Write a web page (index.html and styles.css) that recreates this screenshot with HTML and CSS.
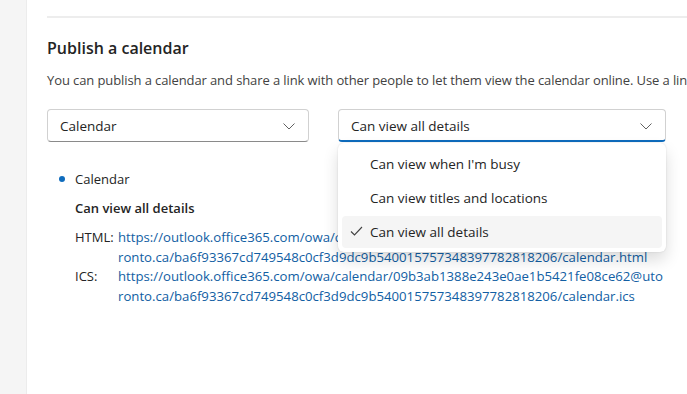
FILE: index.html
```
<!DOCTYPE html>
<html lang="en">
<head>
  <meta charset="UTF-8" />
  <title>Publish a calendar</title>
  <link rel="stylesheet" href="styles.css">
</head>
<body>
  <div class="rail"></div>

  <main class="panel">
    <hr class="divider" />

    <h2 class="title">Publish a calendar</h2>
    <p class="intro">You can publish a calendar and share a link with other people to let them view the calendar online. Use a link to add this calendar to other apps.</p>

    <div class="selects">
      <div class="dropdown">
        <span>Calendar</span>
        <svg class="chevron" width="12" height="12" viewBox="0 0 12 12"><path d="M0.5 3.5l5.5 5.5 5.5-5.5" fill="none" stroke="#616161" stroke-width="1" /></svg>
      </div>

      <div class="dropdown-wrap">
        <div class="dropdown open">
          <span>Can view all details</span>
          <svg class="chevron" width="12" height="12" viewBox="0 0 12 12"><path d="M0.5 3.5l5.5 5.5 5.5-5.5" fill="none" stroke="#616161" stroke-width="1" /></svg>
        </div>
        <ul class="menu">
          <li>Can view when I'm busy</li>
          <li>Can view titles and locations</li>
          <li class="selected">
            <svg class="check" width="13" height="12" viewBox="0 0 13 12"><path d="M1 6.5l3.5 3.5L12 2" fill="none" stroke="#424242" stroke-width="1.1" /></svg>
            Can view all details
          </li>
        </ul>
      </div>
    </div>

    <ul class="published">
      <li>
        <div class="cal-name">Calendar</div>
        <div class="perm">Can view all details</div>
        <div class="links">
          <span class="kind">HTML:</span>
          <a href="#">https://outlook.office365.com/owa/calendar/09b3ab1388e243e0ae1b5421fe08ce62@uto<br>ronto.ca/ba6f93367cd749548c0cf3d9dc9b540015757348397782818206/calendar.html</a>
          <span class="kind">ICS:</span>
          <a href="#">https://outlook.office365.com/owa/calendar/09b3ab1388e243e0ae1b5421fe08ce62@uto<br>ronto.ca/ba6f93367cd749548c0cf3d9dc9b540015757348397782818206/calendar.ics</a>
        </div>
      </li>
    </ul>
  </main>
</body>
</html>
```

FILE: styles.css
```
* {
  box-sizing: border-box;
}

body {
  margin: 0;
  font-family: "Open Sans", "Noto Sans", sans-serif;
  font-size: 13px;
  color: #242424;
  background: #fff;
  display: flex;
  height: 394px;
  overflow: hidden;
}

.rail {
  width: 27px;
  flex-shrink: 0;
  background: #f5f5f5;
  border-right: 1px solid #ececec;
}

.panel {
  flex: 1;
  padding: 16px 0 0 20px;
  min-width: 0;
  overflow: hidden;
}

.divider {
  margin: 0;
  border: none;
  border-top: 2px solid #ededed;
}

.title {
  margin: 19px 0 0;
  font-size: 16px;
  font-weight: 600;
  line-height: 22px;
}

.intro {
  margin: 10px 0 0;
  white-space: nowrap;
  color: #424242;
  line-height: 22px;
  letter-spacing: -0.1px;
}

/* Listes deroulantes */
.selects {
  display: flex;
  gap: 29px;
  margin-top: 18px;
}

.dropdown {
  height: 33px;
  border: 1px solid #d1d1d1;
  border-bottom-color: #8a8a8a;
  border-radius: 4px;
  padding: 0 13px 0 12px;
  display: flex;
  align-items: center;
  justify-content: space-between;
  font-size: 13.5px;
}

.selects > .dropdown {
  width: 262px;
}

.dropdown-wrap {
  position: relative;
  width: 328px;
}

.dropdown.open {
  border-bottom: 2px solid #0f6cbd;
  padding-top: 1px;
}

.menu {
  position: absolute;
  top: 34px;
  left: 0;
  right: 0;
  margin: 0;
  padding: 3px 4px 4px;
  list-style: none;
  background: #fff;
  border-radius: 6px;
  box-shadow: 0 0 2px rgba(0, 0, 0, 0.12), 0 8px 16px rgba(0, 0, 0, 0.14);
  z-index: 2;
}

.menu li {
  height: 32px;
  margin-top: 2px;
  padding-left: 28px;
  display: flex;
  align-items: center;
  border-radius: 4px;
  position: relative;
  font-size: 13.5px;
}

.menu li.selected {
  background: #f5f5f5;
}

.check {
  position: absolute;
  left: 8px;
  top: 9px;
}

/* Calendriers publies */
.published {
  margin: 26px 0 0;
  padding: 0 0 0 28px;
  list-style: none;
}

.published li {
  position: relative;
}

.published li::before {
  content: "";
  position: absolute;
  left: -16px;
  top: 8px;
  width: 6px;
  height: 6px;
  border-radius: 50%;
  background: #0f6cbd;
}

.cal-name {
  line-height: 22px;
}

.perm {
  margin-top: 7px;
  font-weight: 600;
  line-height: 22px;
}

.links {
  margin-top: 9px;
  display: grid;
  grid-template-columns: 43px auto;
  line-height: 19.5px;
}

.kind {
  color: #242424;
}

.links a {
  color: #115ea3;
  text-decoration: none;
  white-space: nowrap;
  font-size: 13.2px;
}
```
